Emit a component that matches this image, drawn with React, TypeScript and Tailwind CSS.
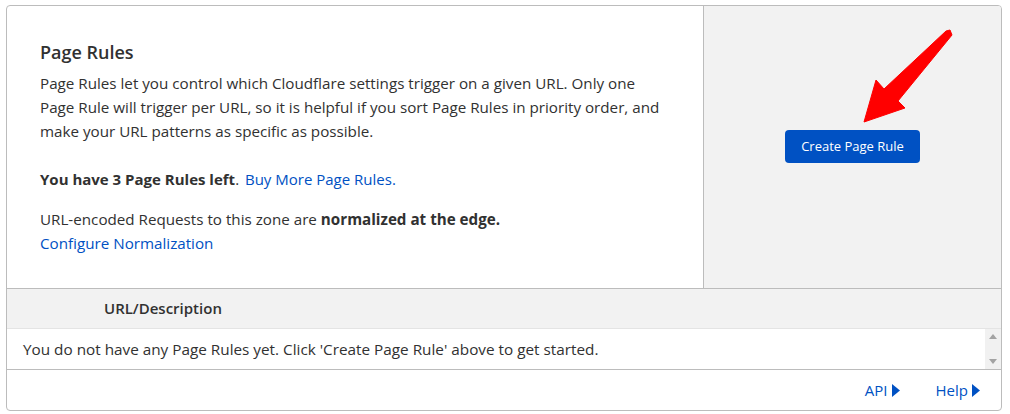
import React from "react";

function Caret() {
  return (
    <svg width="8" height="13" viewBox="0 0 8 13" className="ml-1 inline-block">
      <path d="M0 0 L8 6.5 L0 13 Z" fill="#0051c3" />
    </svg>
  );
}

function RedArrow() {
  return (
    <svg
      width="1010"
      height="414"
      viewBox="0 0 1010 414"
      className="pointer-events-none absolute left-0 top-0"
    >
      <polygon
        points="946,31 950,30 952,35 898,101 905,108 864,122 876,80 884,89"
        fill="#ff0000"
        stroke="#ff0000"
        strokeWidth="1"
        strokeLinejoin="round"
      />
    </svg>
  );
}

export default function App() {
  return (
    <div
      className="relative h-[414px] w-[1010px] bg-white pl-[6px] pt-[5px] text-[#313131]"
      style={{ fontFamily: "'Open Sans', 'Noto Sans', sans-serif" }}
    >
      <div className="flex h-[406px] w-[996px] flex-col overflow-hidden rounded-[4px] border border-[#bcbcbc]">
        <div className="flex h-[283px] border-b border-[#bcbcbc]">
          <div className="w-[697px] border-r border-[#bcbcbc] pl-[33px] pt-[33px]">
            <h2 className="text-[18px] font-semibold leading-[26px] text-[#313131]">Page Rules</h2>
            <p className="mt-[6px] w-[640px] text-[15.2px] leading-[24px]">
              Page Rules let you control which Cloudflare settings trigger on a given URL. Only one
              <br />
              Page Rule will trigger per URL, so it is helpful if you sort Page Rules in priority order, and
              <br />
              make your URL patterns as specific as possible.
            </p>
            <p className="mt-[24px] text-[15px] leading-[24px]">
              <span className="font-bold">You have 3 Page Rules left</span>.{" "}
              <span className="ml-[2px] text-[#0051c3]">Buy More Page Rules.</span>
            </p>
            <p className="mt-[16px] text-[15.2px] leading-[24px]">
              URL-encoded Requests to this zone are <span className="font-bold">normalized at the edge.</span>
              <br />
              <span className="text-[#0051c3]">Configure Normalization</span>
            </p>
          </div>
          <div className="flex flex-1 items-start justify-center bg-[#f2f2f2] pt-[124px]">
            <button className="h-[33px] rounded-[4px] bg-[#0051c3] px-[16px] text-[13px] text-white">
              Create Page Rule
            </button>
          </div>
        </div>
        <div className="flex h-[40px] items-center border-b border-[#e4e4e4] bg-[#f2f2f2] pl-[97px] text-[15px] font-semibold">
          URL/Description
        </div>
        <div className="flex h-[41px] border-b border-[#bcbcbc]">
          <div className="flex flex-1 items-center pl-[16px] text-[15.3px]">
            You do not have any Page Rules yet. Click 'Create Page Rule' above to get started.
          </div>
          <div className="flex w-[16px] flex-col items-center justify-between bg-[#f1f1f1] py-[5px]">
            <svg width="8" height="5" viewBox="0 0 8 5">
              <path d="M0 5 L4 0 L8 5 Z" fill="#a3a3a3" />
            </svg>
            <svg width="8" height="5" viewBox="0 0 8 5">
              <path d="M0 0 L4 5 L8 0 Z" fill="#a3a3a3" />
            </svg>
          </div>
        </div>
        <div className="flex flex-1 items-center justify-end gap-[36px] pr-[21px] text-[15px] text-[#0051c3]">
          <span className="flex items-center">
            API
            <Caret />
          </span>
          <span className="flex items-center">
            Help
            <Caret />
          </span>
        </div>
      </div>
      <RedArrow />
    </div>
  );
}
